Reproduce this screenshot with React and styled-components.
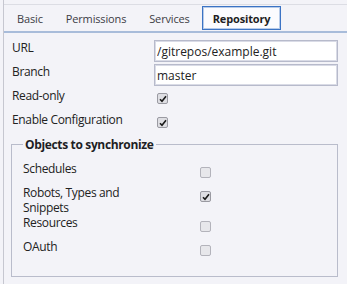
import React from "react";
import styled, { createGlobalStyle } from "styled-components";

const GlobalStyle = createGlobalStyle`
  html, body {
    margin: 0;
    padding: 0;
    background: #f3f3f8;
    font-family: "Open Sans", "Noto Sans", sans-serif;
    font-size: 12px;
    color: #222;
  }
  * { box-sizing: border-box; }
`;

const Panel = styled.div`
  margin-left: 3px;
  border-left: 1px solid #c6c7d0;
  min-height: 284px;
  padding-top: 4px;
`;

const TabBar = styled.div`
  display: flex;
  align-items: flex-start;
  height: 29px;
  border-top: 1px solid #dcdde4;
  border-bottom: 2px solid #a8bcda;
  padding: 1px 0 0 2px;
`;

const Tab = styled.div`
  height: 24px;
  line-height: 23px;
  padding: 0 10px;
  margin-right: ${(p) => (p.$active ? 0 : 1)}px;
  border: 1px solid ${(p) => (p.$active ? "#3b73c4" : "transparent")};
  background: ${(p) => (p.$active ? "#fbfbfe" : "transparent")};
  box-shadow: ${(p) => (p.$active ? "inset 0 0 0 1px #b7cbe9" : "none")};
  font-size: 11px;
  letter-spacing: -0.15px;
  font-weight: ${(p) => (p.$active ? 700 : 400)};
  color: ${(p) => (p.$active ? "#1e1e24" : "#3c3c44")};
  white-space: nowrap;
`;

const Content = styled.div`
  padding: 7px 9px 0 7px;
`;

const FormGrid = styled.div`
  display: grid;
  grid-template-columns: 142px 184px;
  grid-auto-rows: 24px;
  margin-left: 1px;
`;

const Label = styled.div`
  line-height: 15px;
  letter-spacing: -0.35px;
  color: #222;
`;

const TextInput = styled.input`
  width: 184px;
  height: 22px;
  border: 1px solid #b7bacb;
  box-shadow: inset 0 0 0 1px #d9dbe6;
  background: #fff;
  padding: 0 0 0 2px;
  margin: 0;
  font-family: "Open Sans", "Noto Sans", sans-serif;
  font-size: 12px;
  color: #222;
  outline: none;
`;

const Box = styled.span`
  display: block;
  width: 11px;
  height: 11px;
  margin-top: ${(p) => p.$top}px;
  margin-left: ${(p) => p.$left}px;
  border: 1px solid ${(p) => (p.$checked ? "#9a9aa2" : "#b3b3bb")};
  border-radius: 2px;
  background: ${(p) => (p.$checked ? "#dedee3" : "#e7e7eb")};
  position: relative;
  svg {
    position: absolute;
    left: 1px;
    top: 1px;
  }
`;

const Check = ({ checked, top = 6, left = 0 }) => (
  <Box $checked={checked} $top={top} $left={left}>
    {checked && (
      <svg width="8" height="8" viewBox="0 0 8 8">
        <path d="M1 4.2 L3 6.3 L7 1.3" fill="none" stroke="#1a1a1a" strokeWidth="1.6" />
      </svg>
    )}
  </Box>
);

const Fieldset = styled.fieldset`
  margin: 1px 0 0 0;
  width: 327px;
  border: 1px solid #b9bccb;
  padding: 9px 0 13px 11px;
`;

const Legend = styled.legend`
  font-weight: 700;
  line-height: 15px;
  letter-spacing: -0.35px;
  padding: 0 2px;
  color: #1e1e24;
`;

const SyncGrid = styled.div`
  display: grid;
  grid-template-columns: 130px 11px;
  column-gap: 47px;
  grid-auto-rows: minmax(24px, auto);
`;

const tabs = ["Basic", "Permissions", "Services", "Repository"];

const syncItems = [
  { label: "Schedules", checked: false },
  { label: "Robots, Types and Snippets", checked: true },
  { label: "Resources", checked: false },
  { label: "OAuth", checked: false },
];

export default function App() {
  return (
    <>
      <GlobalStyle />
      <Panel>
        <TabBar>
          {tabs.map((t) => (
            <Tab key={t} $active={t === "Repository"}>
              {t}
            </Tab>
          ))}
        </TabBar>
        <Content>
          <FormGrid>
            <Label>URL</Label>
            <TextInput defaultValue="/gitrepos/example.git" />
            <Label>Branch</Label>
            <TextInput defaultValue="master" />
            <Label>Read-only</Label>
            <Check checked top={5} left={3} />
            <Label>Enable Configuration</Label>
            <Check checked top={5} left={3} />
          </FormGrid>
          <Fieldset>
            <Legend>Objects to synchronize</Legend>
            <SyncGrid>
              {syncItems.map((it) => (
                <React.Fragment key={it.label}>
                  <Label>{it.label}</Label>
                  <Check checked={it.checked} top={6} />
                </React.Fragment>
              ))}
            </SyncGrid>
          </Fieldset>
        </Content>
      </Panel>
    </>
  );
}
